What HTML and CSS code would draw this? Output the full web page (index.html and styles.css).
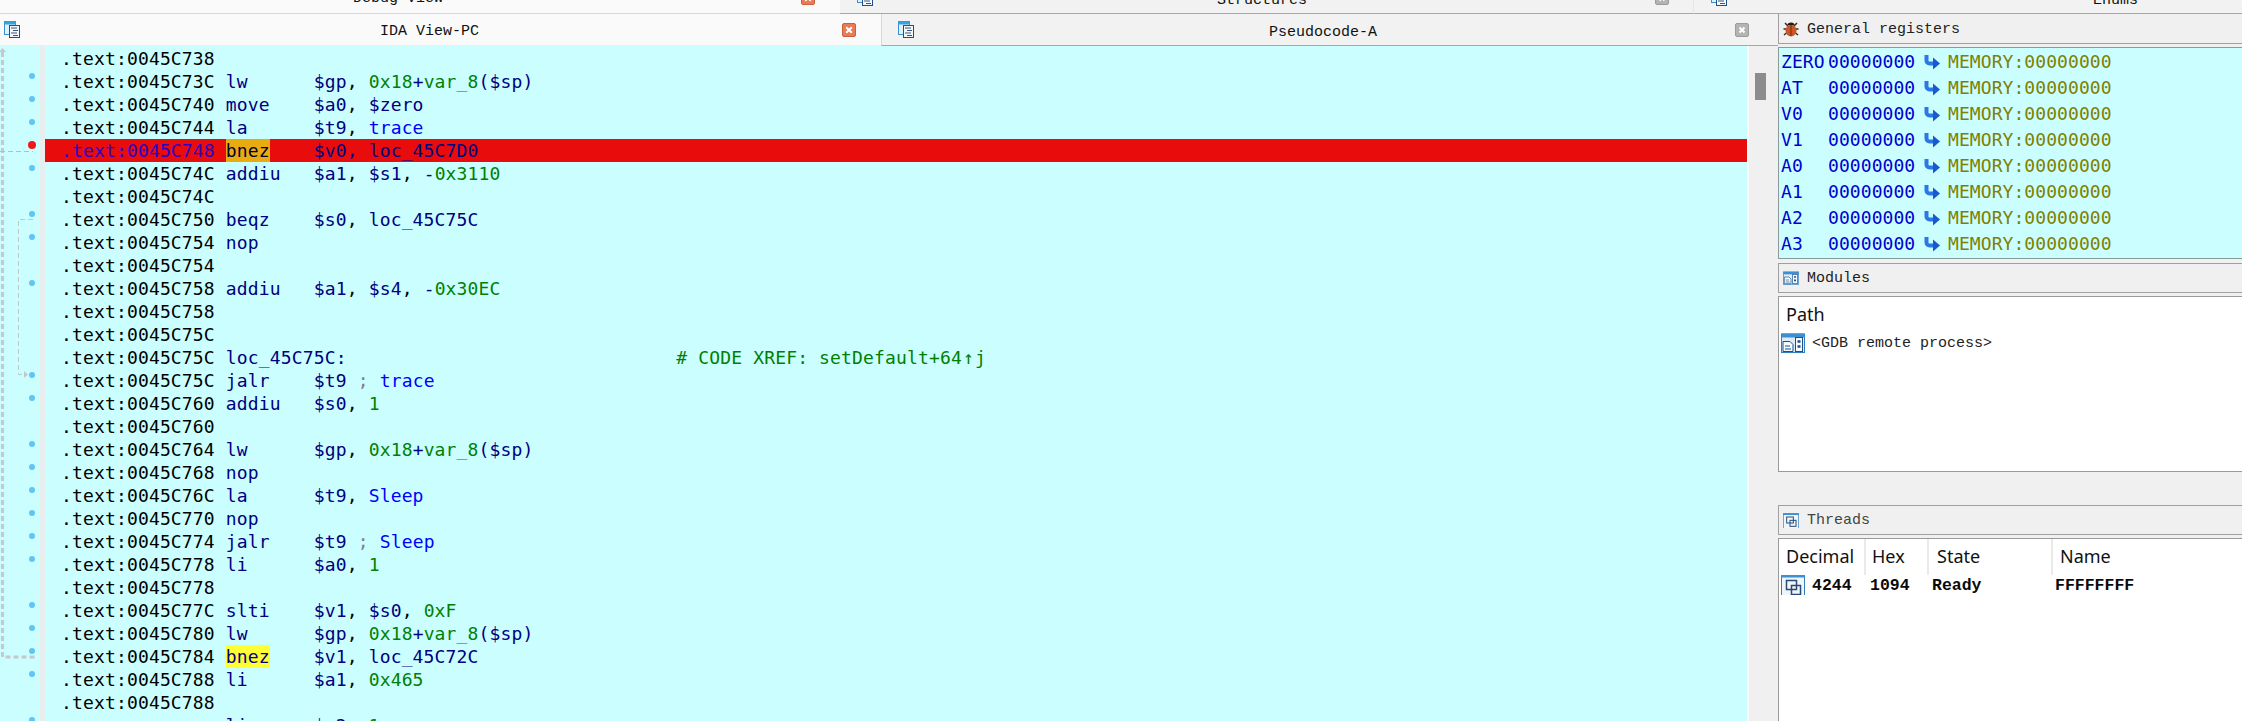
FILE: index.html
```html
<!DOCTYPE html>
<html lang="en">
<head>
<meta charset="utf-8">
<title>IDA View-PC</title>
<link rel="stylesheet" href="styles.css">
</head>
<body>
<svg class="defs" width="0" height="0" aria-hidden="true">
  <defs>
    <symbol id="i-doc" viewBox="0 0 16 17">
      <rect x="0.5" y="0.5" width="11" height="13" fill="#dff2fb" stroke="#3a8fd0"/>
      <rect x="0.5" y="0.5" width="11" height="3" fill="#36a2e0"/>
      <rect x="5.5" y="4.5" width="10" height="12" fill="#f6f9fc" stroke="#1d4f8c"/>
      <path d="M7 7h6M9 9.5h5M7 12h6M9 14.5h5" stroke="#34557f" fill="none"/>
    </symbol>
    <symbol id="i-close" viewBox="0 0 14 14">
      <rect x="0.5" y="0.5" width="13" height="13" rx="1.5" fill="#ea7a55" stroke="#c9603f"/>
      <path d="M4.2 4.2l5.6 5.6M9.8 4.2l-5.6 5.6" stroke="#fff" stroke-width="2" fill="none"/>
    </symbol>
    <symbol id="i-close-g" viewBox="0 0 14 14">
      <rect x="0.5" y="0.5" width="13" height="13" rx="1.5" fill="#b4b4b4" stroke="#9c9c9c"/>
      <path d="M4.5 4.5l5 5M9.5 4.5l-5 5" stroke="#fff" stroke-width="2" fill="none"/>
    </symbol>
    <symbol id="i-arrow" viewBox="0 0 16 16">
      <path d="M2.5 1v5.500a3 3 0 0 0 3 3h5" stroke="#2a78e4" stroke-width="4" fill="none"/>
      <path d="M9 3.500L16 9.500L9 15.500z" fill="#1a58d0"/>
    </symbol>
    <symbol id="i-mod" viewBox="0 0 24 20">
      <rect x="0.5" y="1" width="23" height="18.500" fill="#dcecf8" stroke="#2f7fc4"/>
      <rect x="0.5" y="0.5" width="23" height="4" fill="#3d8fd2"/>
      <path d="M2 8.500h7l3 3v7H2z" fill="#f7fbfe" stroke="#1d4f8c"/>
      <path d="M4 13h5M4 16h6" stroke="#1d4f8c"/>
      <rect x="14.500" y="4.500" width="7" height="14" fill="#f7fbfe" stroke="#1d4f8c"/>
      <path d="M16.500 8.500h3M16.500 13.500h3" stroke="#1d4f8c" stroke-width="2.500"/>
    </symbol>
    <symbol id="i-thr" viewBox="0 0 24 20">
      <rect x="0.5" y="0.5" width="23" height="22" fill="#eef6fc" stroke="#2f7fc4"/>
      <rect x="0" y="0" width="24" height="2.500" fill="#3d8fd2"/>
      <rect x="5.500" y="5.500" width="10" height="9" fill="#f2f6fa" stroke="#2a4a74" stroke-width="1.500"/>
      <rect x="10.500" y="10.500" width="9" height="9" fill="none" stroke="#2a4a74" stroke-width="1.500"/>
    </symbol>
  </defs>
</svg>

<div class="app">
  <div class="strip">
    <div class="strip-tab strip-active">
      <span class="tab-title strip-title-debug">Debug View</span>
      <svg class="ico-close strip-close"><use href="#i-close"/></svg>
    </div>
    <div class="strip-tab strip-struct">
      <svg class="ico-doc strip-doc"><use href="#i-doc"/></svg>
      <span class="tab-title strip-title-struct">Structures</span>
      <svg class="ico-close strip-close-g"><use href="#i-close-g"/></svg>
    </div>
    <div class="strip-tab strip-enums">
      <svg class="ico-doc strip-doc"><use href="#i-doc"/></svg>
      <span class="tab-title strip-title-enums">Enums</span>
    </div>
  </div>
  <div class="body">
  <main class="left">
    <div class="tabs">
      <div class="tab tab-active">
        <svg class="ico-doc"><use href="#i-doc"/></svg>
        <span class="tab-title title-ida">IDA View-PC</span>
        <svg class="ico-close"><use href="#i-close"/></svg>
      </div>
      <div class="tab tab-idle">
        <svg class="ico-doc"><use href="#i-doc"/></svg>
        <span class="tab-title title-pseudo">Pseudocode-A</span>
        <svg class="ico-close"><use href="#i-close-g"/></svg>
      </div>
    </div>
    <div class="code-wrap">
      <div class="gutter">
        <svg class="flow" width="40" height="674" aria-hidden="true">
          <path d="M2.500 6V611H36" stroke="#c6c8cc" stroke-width="3" stroke-dasharray="5 3" fill="none"/>
          <path d="M-1 6l3.500-4 3.500 4z" fill="#c6c8cc"/>
          <path d="M0 105.500H33" stroke="#b9bcc0" stroke-dasharray="5 3" fill="none"/>
          <path d="M33 173.500H18.500V328.500H24" stroke="#c4c6ca" stroke-dasharray="5 3" fill="none"/>
          <path d="M24 325l4 3.500-4 3.500z" fill="#c4c6ca"/>
        </svg>
        <div class="dots">
          <i class="dot none"></i><i class="dot"></i><i class="dot"></i><i class="dot"></i><i class="dot bp"></i>
          <i class="dot"></i><i class="dot none"></i><i class="dot"></i><i class="dot"></i><i class="dot none"></i>
          <i class="dot"></i><i class="dot none"></i><i class="dot none"></i><i class="dot none"></i><i class="dot"></i>
          <i class="dot"></i><i class="dot none"></i><i class="dot"></i><i class="dot"></i><i class="dot"></i>
          <i class="dot"></i><i class="dot"></i><i class="dot"></i><i class="dot none"></i><i class="dot"></i>
          <i class="dot"></i><i class="dot"></i><i class="dot"></i><i class="dot none"></i><i class="dot"></i>
        </div>
      </div>
      <div class="gutter-bar"></div>
      <div class="code">
<div class="ln">.text:0045C738</div>
<div class="ln">.text:0045C73C <b>lw</b>      <b>$gp</b>, <s>0x18</s><b>+</b><s>var_8</s><b>($sp)</b></div>
<div class="ln">.text:0045C740 <b>move</b>    <b>$a0</b>, <b>$zero</b></div>
<div class="ln">.text:0045C744 <b>la</b>      <b>$t9</b>, <u>trace</u></div>
<div class="ln ln-bp"><em>.text:0045C748</em> <mark class="hl-o">bnez</mark>    <b>$v0, loc_45C7D0</b></div>
<div class="ln">.text:0045C74C <b>addiu</b>   <b>$a1</b>, <b>$s1</b>, <b>-</b><s>0x3110</s></div>
<div class="ln">.text:0045C74C</div>
<div class="ln">.text:0045C750 <b>beqz</b>    <b>$s0</b>, <b>loc_45C75C</b></div>
<div class="ln">.text:0045C754 <b>nop</b></div>
<div class="ln">.text:0045C754</div>
<div class="ln">.text:0045C758 <b>addiu</b>   <b>$a1</b>, <b>$s4</b>, <b>-</b><s>0x30EC</s></div>
<div class="ln">.text:0045C758</div>
<div class="ln">.text:0045C75C</div>
<div class="ln">.text:0045C75C <b>loc_45C75C:</b>                              <s># CODE XREF: setDefault+64<span class="up">↑</span>j</s></div>
<div class="ln">.text:0045C75C <b>jalr</b>    <b>$t9</b> <q>;</q> <u>trace</u></div>
<div class="ln">.text:0045C760 <b>addiu</b>   <b>$s0</b>, <s>1</s></div>
<div class="ln">.text:0045C760</div>
<div class="ln">.text:0045C764 <b>lw</b>      <b>$gp</b>, <s>0x18</s><b>+</b><s>var_8</s><b>($sp)</b></div>
<div class="ln">.text:0045C768 <b>nop</b></div>
<div class="ln">.text:0045C76C <b>la</b>      <b>$t9</b>, <u>Sleep</u></div>
<div class="ln">.text:0045C770 <b>nop</b></div>
<div class="ln">.text:0045C774 <b>jalr</b>    <b>$t9</b> <q>;</q> <u>Sleep</u></div>
<div class="ln">.text:0045C778 <b>li</b>      <b>$a0</b>, <s>1</s></div>
<div class="ln">.text:0045C778</div>
<div class="ln">.text:0045C77C <b>slti</b>    <b>$v1</b>, <b>$s0</b>, <s>0xF</s></div>
<div class="ln">.text:0045C780 <b>lw</b>      <b>$gp</b>, <s>0x18</s><b>+</b><s>var_8</s><b>($sp)</b></div>
<div class="ln">.text:0045C784 <mark class="hl-y">bnez</mark>    <b>$v1</b>, <b>loc_45C72C</b></div>
<div class="ln">.text:0045C788 <b>li</b>      <b>$a1</b>, <s>0x465</s></div>
<div class="ln">.text:0045C788</div>
<div class="ln">               <b>li</b>      <b>$a2</b>, <s>1</s></div>
      </div>
      <div class="scroll"><div class="thumb"></div></div>
    </div>
  </main>

  <aside class="right">
    <section class="panel panel-regs">
      <header class="phead">
        <svg class="ico-bug" viewBox="0 0 16 16" aria-hidden="true">
          <path d="M2 2l3 3M14 2l-3 3M0.500 8H3M13 8h2.500M1 14l3-2.500M15 14l-3-2.500" stroke="#3a2a1a" stroke-width="1.500" fill="none"/>
          <ellipse cx="8" cy="9.500" rx="5.500" ry="6" fill="#c8582a"/>
          <path d="M8 4v11" stroke="#6a2c10"/>
          <path d="M4.500 4a3.500 2.500 0 0 1 7 0z" fill="#2a1a10"/>
        </svg>
        <span class="ptitle ptitle-regs">General registers</span>
      </header>
      <div class="regs">
        <div class="reg"><span class="rn">ZERO</span><span class="rv">00000000</span><svg class="ico-arrow"><use href="#i-arrow"/></svg><span class="rm">MEMORY:00000000</span></div>
        <div class="reg"><span class="rn">AT</span><span class="rv">00000000</span><svg class="ico-arrow"><use href="#i-arrow"/></svg><span class="rm">MEMORY:00000000</span></div>
        <div class="reg"><span class="rn">V0</span><span class="rv">00000000</span><svg class="ico-arrow"><use href="#i-arrow"/></svg><span class="rm">MEMORY:00000000</span></div>
        <div class="reg"><span class="rn">V1</span><span class="rv">00000000</span><svg class="ico-arrow"><use href="#i-arrow"/></svg><span class="rm">MEMORY:00000000</span></div>
        <div class="reg"><span class="rn">A0</span><span class="rv">00000000</span><svg class="ico-arrow"><use href="#i-arrow"/></svg><span class="rm">MEMORY:00000000</span></div>
        <div class="reg"><span class="rn">A1</span><span class="rv">00000000</span><svg class="ico-arrow"><use href="#i-arrow"/></svg><span class="rm">MEMORY:00000000</span></div>
        <div class="reg"><span class="rn">A2</span><span class="rv">00000000</span><svg class="ico-arrow"><use href="#i-arrow"/></svg><span class="rm">MEMORY:00000000</span></div>
        <div class="reg"><span class="rn">A3</span><span class="rv">00000000</span><svg class="ico-arrow"><use href="#i-arrow"/></svg><span class="rm">MEMORY:00000000</span></div>
      </div>
    </section>

    <section class="panel panel-mods">
      <header class="phead">
        <svg class="ico-small"><use href="#i-mod"/></svg>
        <span class="ptitle">Modules</span>
      </header>
      <div class="list list-mods">
        <div class="lhead"><span class="lh lh-path">Path</span></div>
        <div class="lrow">
          <svg class="ico-row"><use href="#i-mod"/></svg>
          <span class="gdb">&lt;GDB remote process&gt;</span>
        </div>
      </div>
    </section>

    <section class="panel panel-thr">
      <header class="phead">
        <svg class="ico-small"><use href="#i-thr"/></svg>
        <span class="ptitle ptitle-thr">Threads</span>
      </header>
      <div class="list list-thr">
        <div class="lhead">
          <span class="lh c-dec">Decimal</span>
          <span class="lh c-hex">Hex</span>
          <span class="lh c-state">State</span>
          <span class="lh c-name">Name</span>
        </div>
        <div class="lrow trow">
          <svg class="ico-row"><use href="#i-thr"/></svg>
          <span class="t-dec">4244</span>
          <span class="t-hex">1094</span>
          <span class="t-state">Ready</span>
          <span class="t-name">FFFFFFFF</span>
        </div>
      </div>
    </section>
  </aside>
  </div>
</div>
</body>
</html>
```
FILE: styles.css
```css
* { box-sizing: border-box; }
html, body { margin: 0; height: 100%; overflow: hidden; background: #f0f0f0; }
.defs { position: absolute; }
.app { display: flex; flex-direction: column; width: 2242px; height: 721px; overflow: hidden; }
.body { flex: 1; min-height: 0; display: flex; }
.left { width: 1778px; flex: none; display: flex; flex-direction: column; }
.right { flex: 1; min-width: 0; display: flex; flex-direction: column; }

.tab-title { font: 15px "Liberation Mono", monospace; color: #111; white-space: pre; }

.strip { height: 14px; flex: none; display: flex; overflow: hidden; background: #f2f2f2; }
.strip-tab { height: 14px; display: flex; align-items: flex-start; }
.strip-active { width: 840px; background: #fafafa; border-bottom: 1px solid #d9d9d9; }
.strip-struct { width: 853px; border-bottom: 1px solid #a8a8a8; }
.strip-enums { flex: 1; border-bottom: 1px solid #a8a8a8; border-left: 1px solid #e6e6e6; }
.strip-title-debug { margin: -10px 0 0 353px; }
.strip-close { margin: -9px 0 0 358px; }
.strip-doc { margin: -11px 0 0 17px; }
.strip-title-struct { margin: -8px 0 0 344px; }
.strip-close-g { margin: -9px 0 0 348px; }
.strip-title-enums { margin: -8px 0 0 366px; }

.tabs { height: 32px; flex: none; display: flex; }
.tab { height: 32px; display: flex; align-items: center; }
.tab-active { width: 881px; background: #fafafa; border-bottom: 1px solid #efefef; padding: 0 25px 0 4px; }
.tab-idle { flex: 1; background: #f2f2f2; border-left: 1px solid #d8d8d8; border-bottom: 1px solid #a8a8a8; padding: 0 29px 0 16px; }
.ico-doc { width: 16px; height: 17px; flex: none; }
.ico-close { width: 14px; height: 14px; flex: none; }
.title-ida { margin: 4px auto 0 360px; }
.title-pseudo { margin: 6px auto 0 355px; }

.code-wrap { flex: 1; min-height: 0; display: flex; overflow: hidden; background: #cbffff; }
.gutter { position: relative; width: 40px; flex: none; background: #cbffff; padding-top: 1px; overflow: hidden; }
.flow { position: absolute; left: 0; top: 0; }
.dots { display: flex; flex-direction: column; align-items: center; padding-left: 24px; }
.dot { display: block; width: 6px; height: 6px; border-radius: 50%; background: #62c4f4; margin: 3px 0 14px; flex: none; }
.dot.none { visibility: hidden; }
.dot.bp { width: 8px; height: 8px; background: #f01818; margin: 2px 0 13px; }
.gutter-bar { width: 5px; flex: none; background: #e8eeee; }
.code { flex: 1; min-width: 0; background: #cbffff; padding-top: 1px; font: 18px/23px "DejaVu Sans Mono", monospace; letter-spacing: 0.15px; color: #000; overflow: hidden; }
.ln { height: 23px; padding-left: 16px; white-space: pre; }
.ln b { font-weight: 400; color: #000080; }
.ln s { text-decoration: none; color: #008000; }
.ln u { text-decoration: none; color: #0000ff; }
.ln q { quotes: none; color: #808080; }
.up { margin: 0 1px; }
.ln-bp { background: #e80c0c; }
.ln-bp em { font-style: normal; color: #2a00c8; }
.ln mark { display: inline-block; height: 23px; vertical-align: top; }
.ln .hl-o { background: #e8ac10; color: #000030; }
.ln .hl-y { background: #ffff33; color: #000080; }
.scroll { width: 31px; flex: none; background: #f0f0f0; border-left: 2px solid #fafafa; padding: 27px 0 0 6px; }
.thumb { width: 11px; height: 27px; background: #8c8c8c; }

.phead { display: flex; align-items: center; background: #f0f0f0; border: solid #a0a0a0; border-width: 1.500px 0 1.500px 1.500px; }
.ptitle { font: 15px "Liberation Mono", monospace; color: #222; white-space: pre; }
.ptitle-regs { margin-top: 2px; }
.ptitle-thr { color: #444; }
.ico-bug { width: 16px; height: 16px; flex: none; margin: 0 8px 0 4px; }
.ico-small { width: 16px; height: 16px; flex: none; margin: 0 8px 0 4px; }

.panel-regs { height: 249px; flex: none; display: flex; flex-direction: column; }
.panel-regs .phead { height: 30px; border-top-width: 0; }
.regs { margin-top: 3px; height: 212px; background: #cbffff; border: solid #8a9a9a; border-width: 1.500px 0 1.500px 1.500px; padding: 1px 0 0 2px; font: 18px/26px "DejaVu Sans Mono", monospace; letter-spacing: 0.07px; }
.reg { display: flex; height: 26px; align-items: center; white-space: pre; }
.rn { width: 47px; flex: none; color: #0000d0; }
.rv { width: 96px; flex: none; color: #0000d0; }
.ico-arrow { width: 16px; height: 16px; flex: none; margin-right: 8px; }
.rm { color: #808000; }

.panel-mods { height: 243px; flex: none; display: flex; flex-direction: column; }
.panel-mods .phead { height: 30px; }
.list { background: #fff; margin-top: 3px; border: solid #9a9a9a; border-width: 1.500px 0 0 1.500px; }
.list-mods { height: 176px; border-bottom: 1.500px solid #9a9a9a; }
.lhead { height: 36px; display: flex; align-items: center; }
.lh { font: 18px "Noto Sans", sans-serif; color: #111; white-space: pre; padding-left: 7px; height: 36px; line-height: 34px; }
.lrow { display: flex; height: 20px; align-items: center; padding-left: 2px; overflow: hidden; }
.ico-row { width: 24px; height: 20px; flex: none; }
.gdb { font: 15px "Liberation Mono", monospace; color: #222; margin-left: 7px; white-space: pre; }

.panel-thr { flex: 1; display: flex; flex-direction: column; }
.panel-thr .phead { height: 30px; margin-top: -1px; }
.list-thr { flex: 1; }
.c-dec { width: 87px; border-right: 2px solid #eaeaea; }
.c-hex { width: 63px; border-right: 2px solid #eaeaea; padding-left: 6px; }
.c-state { width: 124px; border-right: 2px solid #eaeaea; padding-left: 8px; }
.c-name { padding-left: 7px; }
.trow span { font: 700 16.500px "Liberation Mono", monospace; color: #0a0a0a; white-space: pre; }
.t-dec { width: 58px; margin-left: 7px; flex: none; }
.t-hex { width: 62px; flex: none; }
.t-state { width: 123px; flex: none; }
```
